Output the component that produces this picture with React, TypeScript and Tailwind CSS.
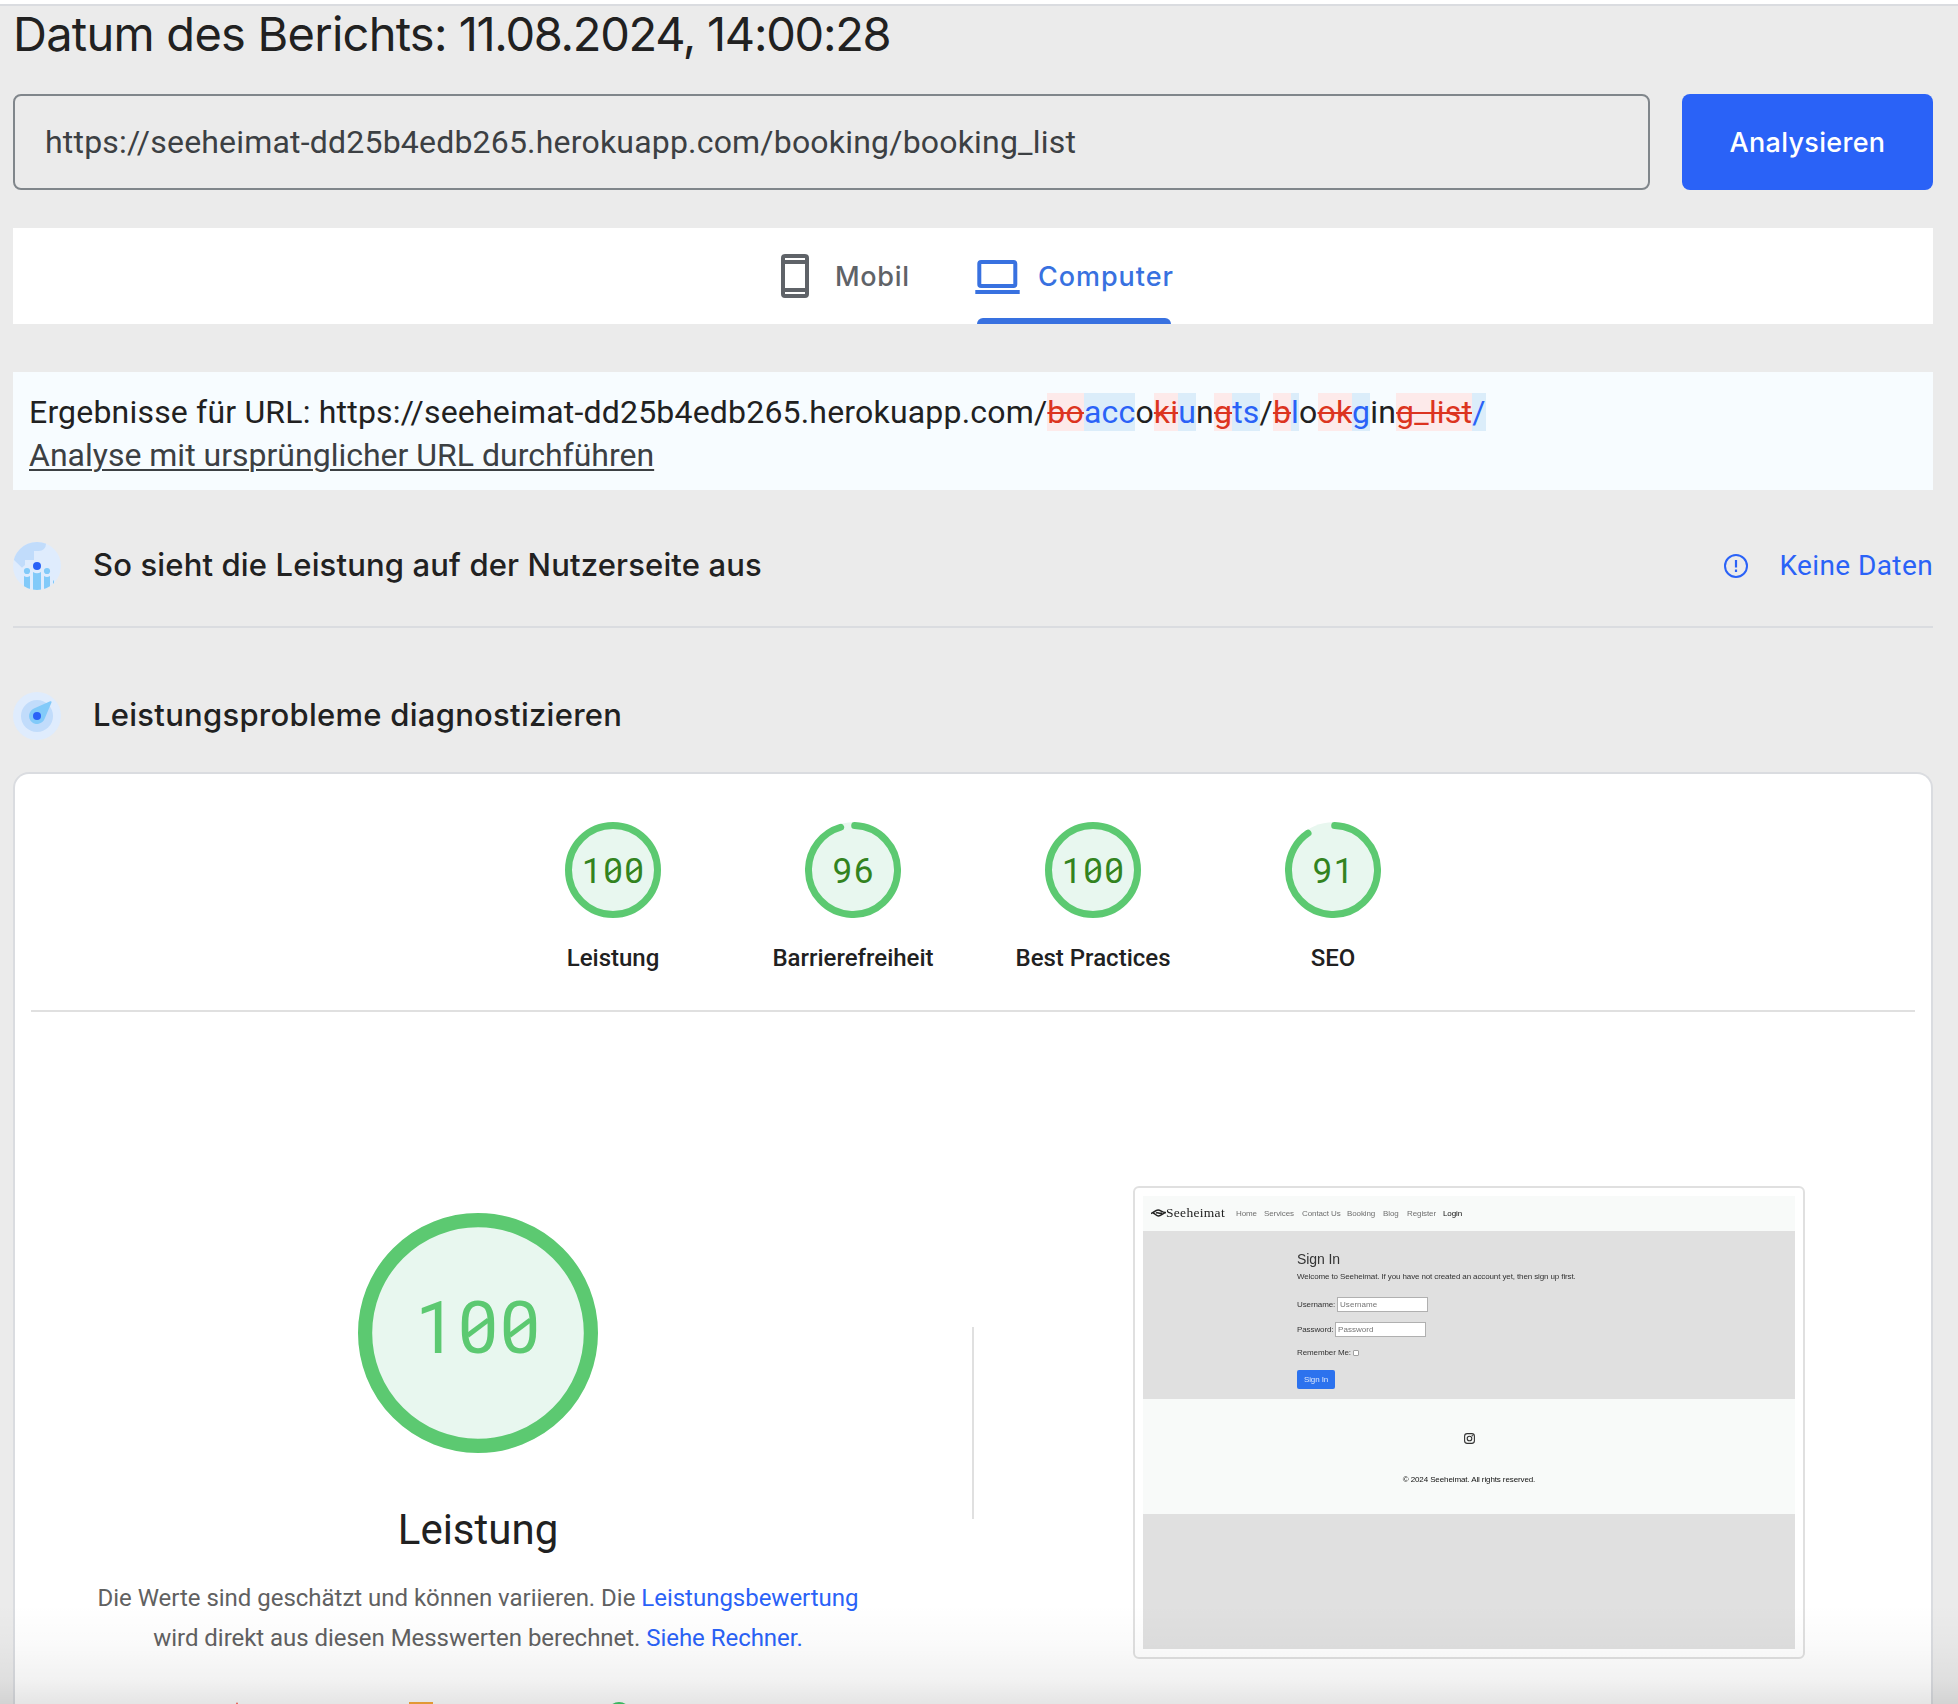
import type { ReactNode } from "react";

function PhoneIcon() {
  return (
    <svg width="28" height="44" viewBox="0 0 28 44" className="shrink-0">
      <path
        fill="#5f6368"
        fillRule="evenodd"
        d="M4 0H24A4 4 0 0 1 28 4V40A4 4 0 0 1 24 44H4A4 4 0 0 1 0 40V4A4 4 0 0 1 4 0ZM4 4V6H24V4ZM4 10V34H24V10ZM4 38V40H24V38Z"
      />
    </svg>
  );
}

function LaptopIcon() {
  return (
    <svg width="45" height="34" viewBox="0 0 45 34" className="mt-[2px] shrink-0">
      <rect x="4.3" y="2" width="36" height="24" rx="1.8" fill="none" stroke="#3871e0" strokeWidth="4" />
      <rect x="0.3" y="30" width="44.4" height="4" fill="#3871e0" />
    </svg>
  );
}

function AudienceIcon() {
  return (
    <svg width="48" height="48" viewBox="0 0 48 48" className="shrink-0">
      <clipPath id="audience">
        <circle cx="24" cy="24" r="24" />
      </clipPath>
      <g clipPath="url(#audience)">
        <rect width="48" height="48" fill="#dfecfd" />
        <path d="M0 0H33V2A7 7 0 0 1 26 9H21V18H12V23L9 25.8L0 17Z" fill="#c1dcfb" />
        <g fill="#82caf9">
          <circle cx="14" cy="29" r="3.1" />
          <circle cx="34" cy="29" r="3.1" />
          <path d="M11 34Q14 36 17 34V48H11Z" />
          <path d="M31 34Q34 36 37 34V48H31Z" />
          <path d="M20 30Q24 32.400 28 30V48H20Z" />
          <path d="M40 39L41 38V42H40Z" />
        </g>
        <circle cx="24" cy="24" r="4" fill="#2a62f7" />
      </g>
    </svg>
  );
}

function CompassIcon() {
  return (
    <svg width="48" height="48" viewBox="0 0 48 48" className="shrink-0">
      <circle cx="24" cy="24" r="24" fill="#dfecfd" />
      <circle cx="24" cy="24" r="16" fill="#c1dcfb" />
      <path d="M37.2 9.300Q38.900 8.800 38.500 10.600L31.500 26.900A8 8 0 1 1 20.900 16.600Z" fill="#82caf9" />
      <circle cx="24" cy="24" r="4" fill="#2a62f7" />
    </svg>
  );
}

function InfoIcon() {
  return (
    <svg width="24" height="24" viewBox="0 0 24 24" fill="none" stroke="#2a62f7" className="shrink-0">
      <circle cx="12" cy="12" r="11" strokeWidth="2" />
      <path d="M12 6V13.500M12 15.500V18" strokeWidth="2.200" />
    </svg>
  );
}

type GaugeProps = {
  score: number;
  size: number;
  stroke: number;
  font: number;
  pitch: number;
  baseline: number;
  color: string;
};

/* Ring gauge with evenly pitched digits and slashed zeros. */
function Gauge({ score, size, stroke, font, pitch, baseline, color }: GaugeProps) {
  const c = size / 2;
  const r = c - stroke / 2;
  const length = 2 * Math.PI * r;
  const arc = score === 100 ? length : (score / 100) * length - stroke / 2;
  const digits = String(score).split("");
  const centers = digits.map((_, i) => c + (i - (digits.length - 1) / 2) * pitch);
  const midY = baseline - font * 0.352;
  return (
    <svg width={size} height={size} viewBox={`0 0 ${size} ${size}`} className="shrink-0">
      <circle cx={c} cy={c} r={c - 0.3} fill="#e8f7ef" />
      <circle
        cx={c}
        cy={c}
        r={r}
        fill="none"
        stroke="#5cc971"
        strokeWidth={stroke}
        strokeLinecap={score === 100 ? "butt" : "round"}
        strokeDasharray={score === 100 ? undefined : `${arc} ${length}`}
        transform={`rotate(${score === 100 ? -90 : -87.8} ${c} ${c})`}
      />
      <text
        x={centers.map((x) => x - font * 0.281).join(" ")}
        y={baseline}
        fontFamily="Roboto, sans-serif"
        fontSize={font}
        fill={color}
      >
        {score}
      </text>
      {digits.map((d, i) =>
        d === "0" ? (
          <path
            key={i}
            d={`M${centers[i] - font * 0.145} ${midY + font * 0.108}L${centers[i] + font * 0.145} ${midY - font * 0.108}`}
            stroke={color}
            strokeWidth={font * 0.068}
          />
        ) : null,
      )}
    </svg>
  );
}

const categories = [
  { label: "Leistung", score: 100 },
  { label: "Barrierefreiheit", score: 96 },
  { label: "Best Practices", score: 100 },
  { label: "SEO", score: 91 },
];

function Del({ children }: { children: ReactNode }) {
  return <del className="bg-[#fdeaea] text-[#dc3420] decoration-[2px]">{children}</del>;
}

function Ins({ children }: { children: ReactNode }) {
  return <ins className="bg-[#dbedfa] text-[#2a62f7] no-underline">{children}</ins>;
}

const nav = [
  { label: "Home", cls: "w-[28px]" },
  { label: "Services", cls: "w-[38px]" },
  { label: "Contact Us", cls: "w-[45px]" },
  { label: "Booking", cls: "w-[36px]" },
  { label: "Blog", cls: "w-[24px]" },
  { label: "Register", cls: "w-[36px]" },
];

function SitePreview() {
  return (
    <div className="h-[473px] w-[672px] shrink-0 rounded-[6px] border-2 border-[#e0e0e0] bg-white p-2">
      <div className="h-[453px] w-[652px] overflow-hidden bg-[#e0e0e0] font-['Liberation_Sans',sans-serif] text-[8px] leading-[10px] tracking-[-0.1px] text-[#333]">
        <div className="flex h-[35px] items-center bg-[#f8faf9] pb-[1px] pl-2">
          <div className="flex items-center blur-[0.3px]">
            <svg width="15" height="8" viewBox="0 0 15 8" fill="none" stroke="#222" strokeWidth="1.500">
              <path d="M0 4.500C3 4 4 1 7 1C10 1 11 4 15 3.500C12 4 10 7 7.500 7C5 7 4 4 2 4.200M5 4C7 3 8 5 11 4" />
            </svg>
            <span className="w-[70px] font-['Liberation_Serif',serif] text-[13.500px] leading-[14px] tracking-[0.300px] text-[#222]">
              Seeheimat
            </span>
          </div>
          <div className="flex pt-[1px] text-[#707070] blur-[0.5px]">
            {nav.map((n) => (
              <span key={n.label} className={`${n.cls} whitespace-nowrap`}>
                {n.label}
              </span>
            ))}
            <span className="text-[#111]">Login</span>
          </div>
        </div>
        <div className="h-[168px] pl-[154px] pt-[20px] blur-[0.5px]">
          <div className="text-[14px] leading-[16px]">Sign In</div>
          <div className="mt-[5px] whitespace-nowrap tracking-[-0.115px]">
            Welcome to Seeheimat. If you have not created an account yet, then sign up first.
          </div>
          <div className="mt-[15px] flex h-[15px] items-center">
            <span className="w-[40px]">Username:</span>
            <span className="flex h-[15px] w-[91px] items-center border border-[#b0b0b0] bg-white pl-[2px] tracking-[0.050px] text-[#757575]">
              Username
            </span>
          </div>
          <div className="mt-[10px] flex h-[15px] items-center">
            <span className="w-[38px]">Password:</span>
            <span className="flex h-[15px] w-[91px] items-center border border-[#b0b0b0] bg-white pl-[2px] tracking-[0.050px] text-[#757575]">
              Password
            </span>
          </div>
          <div className="mt-[10px] flex h-[12px] items-center">
            <span className="w-[56px]">Remember Me:</span>
            <span className="h-[6px] w-[6px] rounded-[1px] border border-[#a0a0a0] bg-white" />
          </div>
          <div className="mt-[11px] flex h-[19px] w-[38px] items-center justify-center rounded-[2px] bg-[#2c72ee] text-[#dbe6fb]">
            Sign In
          </div>
        </div>
        <div className="flex h-[115px] flex-col items-center bg-[#f8faf9] pt-[34px] text-[#111]">
          <svg width="11" height="11" viewBox="0 0 11 11" fill="none" stroke="#333" className="blur-[0.3px]">
            <rect x="0.600" y="0.600" width="9.800" height="9.800" rx="2.600" strokeWidth="1.100" />
            <circle cx="5.500" cy="5.500" r="2.300" strokeWidth="1.100" />
            <circle cx="8.300" cy="2.700" r="0.400" />
          </svg>
          <div className="mt-[31px] whitespace-nowrap tracking-[-0.110px] blur-[0.4px]">
            © 2024 Seeheimat. All rights reserved.
          </div>
        </div>
      </div>
    </div>
  );
}

export default function App() {
  return (
    <div className="relative h-[1704px] w-[1958px] overflow-hidden bg-[#ebebeb] font-[Roboto,sans-serif] text-[#212121]">
      <div className="h-[6px] border-b-2 border-[#dadce0] bg-white" />
      <div className="ml-[13px] w-[1920px]">
        <h1 className="h-[56px] whitespace-pre font-[Inter,sans-serif] text-[47px] leading-[56px]">
          <span className="tracking-[-0.750px]">Datum des Berichts:</span>
          <span className="tracking-[-1.270px]"> 11.08.2024, 14:00:28</span>
        </h1>

        <div className="mt-8 flex h-24 justify-between">
          <div className="flex w-[1637px] items-center rounded-[8px] border-2 border-[#80868b] pl-[30px] text-[32px] tracking-[0.195px] text-[#3c4043]">
            https://seeheimat-dd25b4edb265.herokuapp.com/booking/booking_list
          </div>
          <button className="h-24 w-[251px] rounded-[8px] bg-[#2a62f7] pt-[2px] font-[Inter,sans-serif] text-[27px] font-medium tracking-[0.300px] text-white">
            Analysieren
          </button>
        </div>

        <div className="mt-[38px] flex h-24 bg-white pl-[768px] font-[Inter,sans-serif] text-[27px] font-medium">
          <div className="flex h-24 w-[194px] items-center text-[#5f6368]">
            <PhoneIcon />
            <span className="ml-[26px] pt-[2px] tracking-[0.700px]">Mobil</span>
          </div>
          <div className="relative flex h-24 items-center text-[#3871e0]">
            <LaptopIcon />
            <span className="ml-[18px] pt-[2px] tracking-[0.950px]">Computer</span>
            <div className="absolute bottom-0 left-[2px] h-[6px] w-[194px] rounded-t-[6px] bg-[#3871e0]" />
          </div>
        </div>

        <div className="mt-12 h-[118px] bg-[#f7fcff] pl-4 pt-[19px] text-[32px] leading-[43px]">
          <div className="whitespace-nowrap tracking-[0.190px]">
            Ergebnisse für URL: https://seeheimat-dd25b4edb265.herokuapp.com/<Del>bo</Del>
            <Ins>acc</Ins>o<Del>ki</Del>
            <Ins>u</Ins>n<Del>g</Del>
            <Ins>ts</Ins>/<Del>b</Del>
            <Ins>l</Ins>o<Del>ok</Del>
            <Ins>g</Ins>in<Del>g_list</Del>
            <Ins>/</Ins>
          </div>
          <span className="text-[#3c4043] underline decoration-[2px] underline-offset-[3px]">
            Analyse mit ursprünglicher URL durchführen
          </span>
        </div>

        <div className="flex h-[138px] items-center border-b-2 border-[#dadce0] pt-4">
          <AudienceIcon />
          <h2 className="ml-8 pb-[2px] font-[Inter,sans-serif] text-[31px] font-medium tracking-[0.150px]">
            So sieht die Leistung auf der Nutzerseite aus
          </h2>
          <div className="ml-auto flex items-center text-[#2a62f7]">
            <InfoIcon />
            <span className="ml-[31px] text-[28px] tracking-[0.400px]">Keine Daten</span>
          </div>
        </div>

        <div className="mt-16 flex h-12 items-center">
          <CompassIcon />
          <h2 className="ml-8 pb-[2px] font-[Inter,sans-serif] text-[31px] font-medium tracking-[0.270px]">
            Leistungsprobleme diagnostizieren
          </h2>
        </div>

        <section className="mt-8 h-[1000px] rounded-t-[16px] border-2 border-b-0 border-[#dadce0] bg-white px-4">
          <div className="flex h-[238px] justify-center border-b-2 border-[#e0e0e0] pt-12">
            {categories.map((c) => (
              <div key={c.label} className="flex w-60 flex-col items-center">
                <Gauge score={c.score} size={96} stroke={7} font={35} pitch={21.1} baseline={61} color="#33831f" />
                <span className="mt-6 text-[24px] font-medium leading-8">{c.label}</span>
              </div>
            ))}
          </div>

          <div className="flex">
            <div className="flex w-[894px] flex-col items-center pt-[201px]">
              <Gauge score={100} size={240} stroke={14.2} font={72} pitch={42} baseline={140} color="#5cc971" />
              <div className="mt-[49px] text-[42px] leading-[56px]">Leistung</div>
              <p className="mt-5 whitespace-nowrap text-center text-[24px] leading-10 tracking-[-0.020px] text-[#616161]">
                Die Werte sind geschätzt und können variieren. Die{" "}
                <a className="text-[#2a62f7]">Leistungsbewertung</a>
                <br />
                <span className="tracking-[-0.040px]">
                  wird direkt aus diesen Messwerten berechnet. <a className="text-[#2a62f7]">Siehe Rechner.</a>
                </span>
              </p>
              <div className="mt-[44px] flex self-start pl-[194px]">
                <svg width="24" height="24" viewBox="0 0 24 24">
                  <path d="M12 0L24 24H0Z" fill="#ff4e42" />
                </svg>
                <div className="ml-[160px] h-6 w-6 bg-[#fba93a]" />
                <div className="ml-[174px] h-6 w-6 rounded-full bg-[#3fcb68]" />
              </div>
            </div>
            <div className="ml-[47px] mt-[315px] h-[192px] w-[2px] bg-[#e0e0e0]" />
            <div className="ml-[159px] mt-[174px]">
              <SitePreview />
            </div>
          </div>
        </section>
      </div>
      <div className="pointer-events-none absolute inset-x-0 bottom-0 h-[100px] bg-[linear-gradient(to_bottom,transparent,rgba(0,0,0,0.02)_40%,rgba(0,0,0,0.05)_75%,rgba(0,0,0,0.1))]" />
    </div>
  );
}
